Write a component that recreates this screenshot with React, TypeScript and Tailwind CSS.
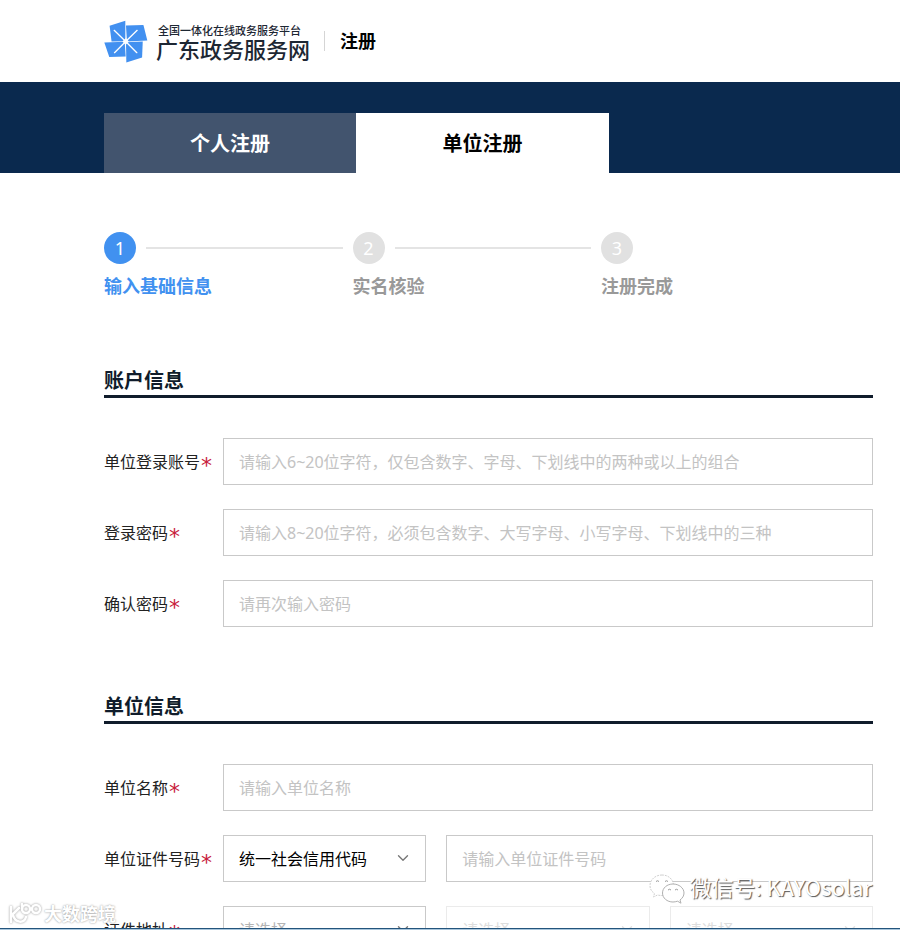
import type { ReactNode } from "react";
import { ChevronDown } from "lucide-react";

const steps = ["输入基础信息", "实名核验", "注册完成"];

const accountFields = [
  { id: "account", label: "单位登录账号", type: "text", placeholder: "请输入6~20位字符，仅包含数字、字母、下划线中的两种或以上的组合" },
  { id: "password", label: "登录密码", type: "password", placeholder: "请输入8~20位字符，必须包含数字、大写字母、小写字母、下划线中的三种" },
  { id: "confirm", label: "确认密码", type: "password", placeholder: "请再次输入密码" },
];

const inputClass =
  "h-[47px] w-full min-w-0 border border-[#c9c9c9] bg-white px-[15px] text-base text-black outline-none placeholder:text-[#c3c3c3] focus:border-[#4191f0]";

function Logo() {
  return (
    <svg viewBox="12 22 134 130" className="h-[43px] w-11 shrink-0" aria-hidden>
      <g fill="#4290f0">
        <path d="M29 39 77 24V86L35 87Z" />
        <path d="M79 38 132 37 144 84 82 87Z" />
        <path d="M13 90 75 88 78 133 28 134Z" />
        <path d="M79 89 130 87 128 136 80 151Z" />
      </g>
      <g stroke="#fff" strokeWidth="4" strokeLinecap="round">
        <path d="M78 87 43 53M78 87 113 53M78 87 44 121M78 87 112 121" />
      </g>
      <path d="M78 77 88 87 78 97 68 87Z" fill="#fff" />
    </svg>
  );
}

function Row({ id, label, children }: { id: string; label: string; children: ReactNode }) {
  return (
    <div className="flex items-center">
      <label htmlFor={id} className="flex w-[119px] shrink-0 items-center gap-px text-base text-[#222]">
        {label}
        <span className="h-6 pt-1 text-[22px] leading-6 text-[#c8203c] [font-family:'DejaVu_Sans',sans-serif]">*</span>
      </label>
      <div className="min-w-0 flex-1">{children}</div>
    </div>
  );
}

function Select({ id, label, options, disabled }: { id: string; label: string; options: string[]; disabled?: boolean }) {
  const placeholder = options[0] === "请选择";
  return (
    <div className="relative">
      <select
        id={id}
        aria-label={label}
        disabled={disabled}
        className={`h-[47px] w-full appearance-none border bg-white px-[15px] text-base outline-none ${
          disabled ? "border-[#ebebeb] text-[#dedede]" : placeholder ? "border-[#c9c9c9] text-[#b5b5b5]" : "border-[#c9c9c9] text-black"
        }`}
      >
        {options.map((o) => (
          <option key={o}>{o}</option>
        ))}
      </select>
      <ChevronDown
        size={18}
        strokeWidth={1.8}
        className={`pointer-events-none absolute top-3.5 right-3.5 ${disabled ? "text-[#e0e0e0]" : "text-[#777]"}`}
      />
    </div>
  );
}

function Section({ title, children }: { title: string; children: ReactNode }) {
  return (
    <section>
      <h2 className="border-b-3 border-[#101c2b] text-xl leading-7 font-bold text-[#101c2b]">{title}</h2>
      <div className="mt-10 flex flex-col gap-6">{children}</div>
    </section>
  );
}

function WechatMark() {
  return (
    <div className="absolute right-7 bottom-6 flex items-center gap-1">
      <svg viewBox="0 0 36 32" className="h-8 w-9" fill="#fff" stroke="#b0b0b0" aria-hidden>
        <path
          d="M13 3C6 3 1 8 1 13.500c0 3.500 1.500 6 4.500 8L4.500 25l4-2c8 2 16-2 16-9.500C24.500 8 20 3 13 3Z"
          stroke="#d0d0d0"
          strokeDasharray="2 1"
        />
        <path d="M24 12c-6 0-10.500 4-10.500 9s4.500 9 10.500 9c1.500 0 3-.3 4.500-.8l3.500 2-1-3.200c2.500-1.800 4-4.200 4-7 0-5-5-9-11-9Z" />
        <path d="M7 9.500q1.500-1.500 3 0M16 9.500q1.500-1.500 3 0M19 18q1.500-1.500 3 0M26 18q1.500-1.500 3 0" fill="none" stroke="#999" />
      </svg>
      <span className="pb-1 text-[22px] leading-8 text-white [font-family:'Noto_Sans_CJK_SC',sans-serif] [text-shadow:1px_1px_1px_#555]">
        微信号: KAYOsolar
      </span>
    </div>
  );
}

function CornerMark() {
  return (
    <div className="absolute bottom-1 left-2 flex items-center gap-0.5">
      <svg
        viewBox="0 0 34 24"
        className="h-6 w-[34px] drop-shadow-[0_0_1px_#999]"
        fill="none"
        stroke="#fff"
        strokeWidth="2.500"
        strokeLinecap="round"
        aria-hidden
      >
        <path d="M3 5V20M4 13 11 6M5 13C7 21 16 22 18 15" />
        <path d="M14 2V7" />
        <circle cx="18" cy="7" r="4" />
        <circle cx="28" cy="7" r="4" />
      </svg>
      <span className="text-lg leading-6 font-bold text-white [text-shadow:0_0_2px_#888]">大数跨境</span>
    </div>
  );
}

export default function App() {
  return (
    <div className="relative flex h-screen flex-col overflow-hidden bg-white [font-family:'Noto_Sans','Noto_Sans_CJK_SC',sans-serif]">
      <header className="flex h-[82px] shrink-0 items-center pl-[104px]">
        <Logo />
        <div className="ml-2 flex flex-col text-[#1d2733]">
          <span className="pl-0.5 text-[11px] leading-4 font-medium">全国一体化在线政务服务平台</span>
          <span className="text-[22px] leading-5 font-medium">广东政务服务网</span>
        </div>
        <span className="ml-3.5 h-5 w-px bg-[#d5d5d5]" />
        <h1 className="ml-[15px] text-lg leading-6 font-bold text-black">注册</h1>
      </header>

      <nav className="shrink-0 bg-[#0a294e] pt-[31px] pr-[27px] pl-[104px]">
        <div className="flex">
          <button type="button" className="h-[60px] w-[252px] pt-0.5 bg-[#42546e] text-xl font-bold text-white">
            个人注册
          </button>
          <button type="button" className="h-[60px] w-[253px] pt-0.5 bg-white text-xl font-bold text-black">
            单位注册
          </button>
        </div>
      </nav>

      <main className="min-h-0 flex-1 overflow-hidden pt-[59px] pr-[27px] pl-[104px]">
        <ol className="mb-[67px] grid grid-cols-[1fr_1fr_272px]">
          {steps.map((step, i) => (
            <li key={step} className="flex flex-col gap-2">
              <div className="flex items-center gap-2.5">
                <span
                  className={`flex size-8 shrink-0 items-center justify-center rounded-full text-lg text-white ${
                    i === 0 ? "bg-[#4191f0]" : "bg-[#e1e1e1]"
                  }`}
                >
                  {i + 1}
                </span>
                {i < 2 && <span className="mr-2.5 h-0.5 flex-1 bg-[#e4e4e4]" />}
              </div>
              <span className={`text-lg leading-7 font-bold ${i === 0 ? "text-[#4191f0]" : "text-[#999]"}`}>{step}</span>
            </li>
          ))}
        </ol>

        <form className="flex flex-col gap-[66px]">
          <Section title="账户信息">
            {accountFields.map((f) => (
              <Row key={f.id} id={f.id} label={f.label}>
                <input id={f.id} type={f.type} placeholder={f.placeholder} className={inputClass} />
              </Row>
            ))}
          </Section>

          <Section title="单位信息">
            <Row id="unit-name" label="单位名称">
              <input id="unit-name" type="text" placeholder="请输入单位名称" className={inputClass} />
            </Row>
            <Row id="cert-type" label="单位证件号码">
              <div className="grid grid-cols-3 gap-5">
                <Select id="cert-type" label="单位证件类型" options={["统一社会信用代码"]} />
                <div className="col-span-2">
                  <input type="text" aria-label="单位证件号码" placeholder="请输入单位证件号码" className={inputClass} />
                </div>
              </div>
            </Row>
            <Row id="province" label="证件地址">
              <div className="grid grid-cols-3 gap-5">
                <Select id="province" label="省" options={["请选择"]} />
                <Select id="city" label="市" options={["请选择"]} disabled />
                <Select id="district" label="区" options={["请选择"]} disabled />
              </div>
            </Row>
          </Section>
        </form>
      </main>

      <div className="h-0.5 shrink-0 border-t border-[#23547c] bg-[#a9c6dc]" />

      <WechatMark />
      <CornerMark />
    </div>
  );
}
